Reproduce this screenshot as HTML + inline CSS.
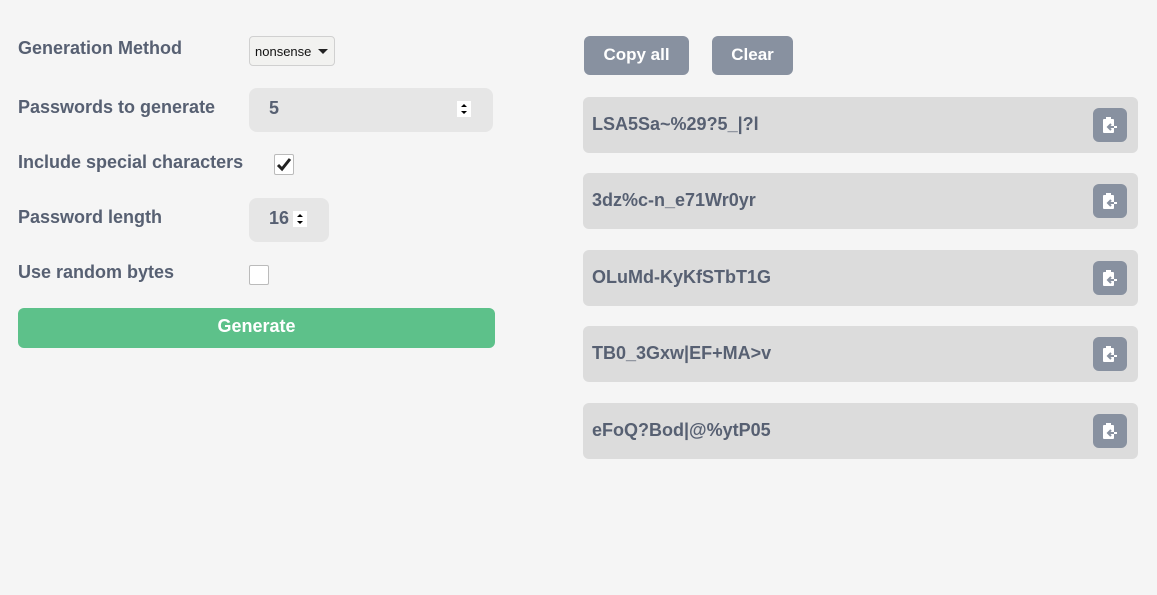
<!DOCTYPE html>
<html><head><style>
body{margin:0;background:#f5f5f5;font-family:"Liberation Sans",sans-serif;width:1157px;height:595px;overflow:hidden;position:relative;color:#576072}
.l{position:absolute;left:18px;font-weight:bold;font-size:18px}
.abs{position:absolute}
.num{background:#e6e6e6;border-radius:8px;font-weight:bold;font-size:18px}
.spin{position:absolute;background:#fff;width:14px;height:16px;text-indent:0}
.spin svg{display:block}
.btn{position:absolute;background:#8891a0;color:#fff;font-weight:bold;font-size:17px;border-radius:6px;text-align:center;line-height:37px;top:36px;height:39px}
.row{position:absolute;left:583px;width:555px;height:56px;background:#dcdcdc;border-radius:6px;font-weight:bold;font-size:18px;line-height:54px;text-indent:9px}
.ic{position:absolute;right:11px;top:11px;width:34px;height:34px;background:#8891a0;border-radius:6px;text-indent:0}
.ic svg{position:absolute;left:9px;top:8px}
</style></head><body>
<div class="l" style="top:38px">Generation Method</div>
<div class="abs" style="left:249px;top:36px;width:84px;height:28px;border:1px solid #d0d0d0;border-radius:4px;background:#f2f2f0;font-size:13px;color:#111;line-height:29px;text-indent:5px">nonsense<span style="position:absolute;left:68px;top:12px;border-left:5px solid transparent;border-right:5px solid transparent;border-top:5px solid #222;width:0;height:0"></span></div>
<div class="l" style="top:97px">Passwords to generate</div>
<div class="abs num" style="left:249px;top:88px;width:244px;height:44px;line-height:40px;text-indent:20px">5<div class="spin" style="left:208px;top:13px"><svg width="14" height="16"><path d="M4 6 L7 3 L10 6Z M4 10 L7 13 L10 10Z" fill="#000"/></svg></div></div>
<div class="l" style="top:152px">Include special characters</div>
<div class="abs" style="left:274px;top:154px;width:18px;height:19px;border:1px solid #bbb;border-radius:2px;background:#fff"><svg width="18" height="19"><path d="M3 10 L7 14 L15 4" stroke="#222" stroke-width="3" fill="none"/></svg></div>
<div class="l" style="top:207px">Password length</div>
<div class="abs num" style="left:249px;top:198px;width:80px;height:44px;line-height:40px;text-indent:20px">16<div class="spin" style="left:44px;top:13px"><svg width="14" height="16"><path d="M4 6 L7 3 L10 6Z M4 10 L7 13 L10 10Z" fill="#000"/></svg></div></div>
<div class="l" style="top:262px">Use random bytes</div>
<div class="abs" style="left:249px;top:265px;width:18px;height:18px;border:1px solid #bbb;border-radius:2px;background:#fff"></div>
<div class="abs" style="left:18px;top:308px;width:477px;height:40px;background:#5dc18a;border-radius:6px;color:#fff;font-weight:bold;font-size:18px;text-align:center;line-height:36px">Generate</div>
<div class="btn" style="left:584px;width:105px">Copy all</div>
<div class="btn" style="left:712px;width:81px">Clear</div>
<div class="row" style="top:97px">LSA5Sa~%29?5_|?l<div class="ic"><svg width="16" height="18"><rect x="1" y="3" width="11" height="14" rx="1" fill="#fff"/><rect x="4" y="1" width="5" height="3" fill="#fff"/><path d="M15 11 H6 M9 8 L6 11 L9 14" stroke="#8891a0" stroke-width="2" fill="none"/><path d="M12 11 H15" stroke="#fff" stroke-width="2"/></svg></div></div>
<div class="row" style="top:173px">3dz%c-n_e71Wr0yr<div class="ic"><svg width="16" height="18"><rect x="1" y="3" width="11" height="14" rx="1" fill="#fff"/><rect x="4" y="1" width="5" height="3" fill="#fff"/><path d="M15 11 H6 M9 8 L6 11 L9 14" stroke="#8891a0" stroke-width="2" fill="none"/><path d="M12 11 H15" stroke="#fff" stroke-width="2"/></svg></div></div>
<div class="row" style="top:250px">OLuMd-KyKfSTbT1G<div class="ic"><svg width="16" height="18"><rect x="1" y="3" width="11" height="14" rx="1" fill="#fff"/><rect x="4" y="1" width="5" height="3" fill="#fff"/><path d="M15 11 H6 M9 8 L6 11 L9 14" stroke="#8891a0" stroke-width="2" fill="none"/><path d="M12 11 H15" stroke="#fff" stroke-width="2"/></svg></div></div>
<div class="row" style="top:326px">TB0_3Gxw|EF+MA&gt;v<div class="ic"><svg width="16" height="18"><rect x="1" y="3" width="11" height="14" rx="1" fill="#fff"/><rect x="4" y="1" width="5" height="3" fill="#fff"/><path d="M15 11 H6 M9 8 L6 11 L9 14" stroke="#8891a0" stroke-width="2" fill="none"/><path d="M12 11 H15" stroke="#fff" stroke-width="2"/></svg></div></div>
<div class="row" style="top:403px">eFoQ?Bod|@%ytP05<div class="ic"><svg width="16" height="18"><rect x="1" y="3" width="11" height="14" rx="1" fill="#fff"/><rect x="4" y="1" width="5" height="3" fill="#fff"/><path d="M15 11 H6 M9 8 L6 11 L9 14" stroke="#8891a0" stroke-width="2" fill="none"/><path d="M12 11 H15" stroke="#fff" stroke-width="2"/></svg></div></div>
</body></html>
